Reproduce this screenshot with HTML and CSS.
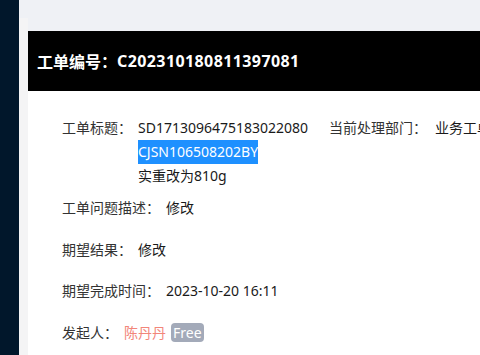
FILE: index.html
```html
<!DOCTYPE html>
<html>
    <head>
        <meta charset="UTF-8">
        <title>工单详情</title>
        <link rel="stylesheet" href="styles.css">
    </head>
    <body>
        <div class="layout">
            <!--侧边栏-->
            <div class="sider"></div>
            <div class="main">
                <div class="gutter"></div>
                <div class="content">
                    <div class="card">
                        <div class="card-head">工单编号：<span class="code">C202310180811397081</span></div>
                        <div class="card-body">
                            <div class="row row-title">
                                <span class="label">工单标题：</span>
                                <div class="value">
                                    <div class="line">SD1713096475183022080<span class="dept">当前处理部门：</span><span class="dept-name">业务工单部</span></div>
                                    <div class="line"><span class="mark">CJSN106508202BY</span></div>
                                    <div class="line">实重改为810g</div>
                                </div>
                            </div>
                            <div class="row">
                                <span class="label">工单问题描述：</span>
                                <div class="value">修改</div>
                            </div>
                            <div class="row">
                                <span class="label">期望结果：</span>
                                <div class="value">修改</div>
                            </div>
                            <div class="row">
                                <span class="label">期望完成时间：</span>
                                <div class="value">2023-10-20 16:11</div>
                            </div>
                            <div class="row">
                                <span class="label">发起人：</span>
                                <div class="value"><span class="user">陈丹丹</span><span class="tag">Free</span></div>
                            </div>
                        </div>
                    </div>
                </div>
            </div>
        </div>
    </body>
</html>
```

FILE: styles.css
```css
body{
    margin: 0;
    overflow: hidden;
    font-size: 14px;
    font-family: "Noto Sans", "Noto Sans CJK SC", sans-serif;
    color: #222;
}
.layout{
    display: flex;
    height: 100vh;
}
.sider{
    width: 19px;
    background-color: #01172b;
}
.main{
    flex: 1;
    display: flex;
    min-width: 0;
    background-color: #eff1f5;
}
.gutter{
    width: 9px;
    margin-top: 18px;
    background-color: #f4f4f5;
}
.content{
    flex: 1;
    min-width: 0;
    padding-top: 31px;
    display: flex;
    flex-direction: column;
}
.card{
    flex: 1;
    background-color: white;
}
.card-head{
    height: 60px;
    display: flex;
    align-items: center;
    padding-left: 9px;
    background-color: black;
    color: white;
    font-size: 16px;
    font-weight: bold;
}
.card-head .code{
    letter-spacing: 0.4px;
}
.card-body{
    padding: 25px 0 0 34px;
}
.row{
    display: flex;
    line-height: 24px;
    margin-bottom: 17.5px;
}
.row-title{
    margin-bottom: 8px;
}
.label{
    color: #333;
    white-space: nowrap;
}
.value{
    margin-left: 6px;
    color: #1a1a1a;
}
.line{
    white-space: nowrap;
}
.dept{
    margin-left: 21px;
    color: #333;
}
.dept-name{
    margin-left: 8px;
}
.mark{
    display: inline-block;
    background-color: #1e90ff;
    color: white;
}
.user{
    color: #f2867a;
}
.tag{
    display: inline-block;
    margin-left: 5px;
    padding: 0 2px;
    line-height: 19px;
    border-radius: 4px;
    background-color: #a3aab9;
    color: white;
}
```
